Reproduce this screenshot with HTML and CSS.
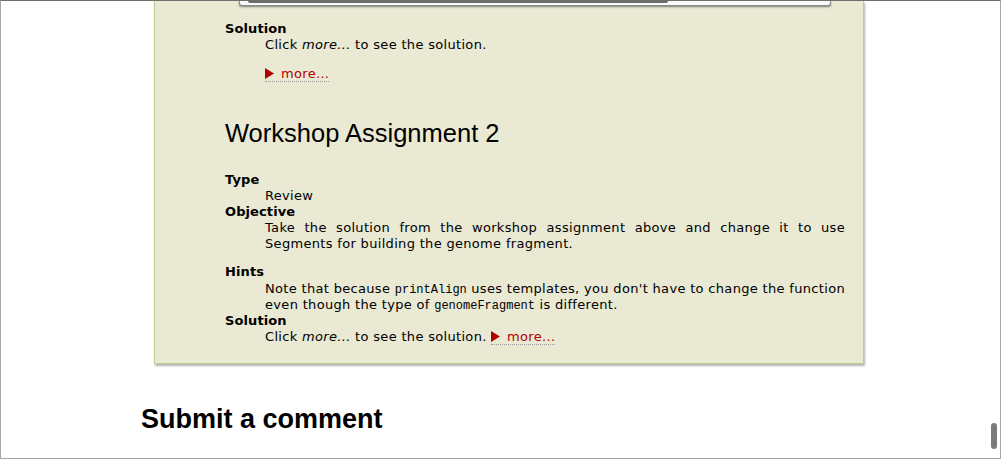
FILE: index.html
```html
<!DOCTYPE html>
<html>
<head>
<meta charset="utf-8">
<link rel="stylesheet" href="styles.css">
</head>
<body>
<div class="window">
  <div class="page">
    <div class="assign">
      <div class="code"><div class="hscroll"></div></div>
      <dl class="fields first">
        <dt>Solution</dt>
        <dd>
          <p>Click <em>more...</em> to see the solution.</p>
          <p class="toggle"><a class="more"><svg class="tri" width="9" height="11" viewBox="0 0 9 11"><path d="M0 0 L9 5.5 L0 11 Z" fill="#b00000"/></svg>more...</a></p>
        </dd>
      </dl>
      <h2 class="title">Workshop Assignment 2</h2>
      <dl class="fields">
        <dt>Type</dt>
        <dd>Review</dd>
        <dt>Objective</dt>
        <dd><p class="para">Take the solution from the workshop assignment above and change it to use Segments for building the genome fragment.</p></dd>
        <dt>Hints</dt>
        <dd class="hints">Note that because <code>printAlign</code> uses templates, you don't have to change the function even though the type of <code>genomeFragment</code> is different.</dd>
        <dt>Solution</dt>
        <dd>Click <em>more...</em> to see the solution. <a class="more"><svg class="tri" width="9" height="11" viewBox="0 0 9 11"><path d="M0 0 L9 5.5 L0 11 Z" fill="#b00000"/></svg>more...</a></dd>
      </dl>
    </div>
    <h1 class="comment">Submit a comment</h1>
  </div>
  <div class="vthumb"></div>
</div>
</body>
</html>
```
FILE: styles.css
```css
html, body {
  margin: 0;
  padding: 0;
  background: #fff;
}
.window {
  position: relative;
  box-sizing: border-box;
  width: 1001px;
  height: 459px;
  overflow: hidden;
  border: 1px solid #a6a6a6;
  border-top-color: #6e6e6e;
  font-family: "DejaVu Sans", Verdana, sans-serif;
  font-size: 13px;
  line-height: 16px;
  color: #000;
}
.page {
  margin-left: 140px;
}
.assign {
  margin-left: 13px;
  width: 710px;
  box-sizing: border-box;
  background: #e9e9d4;
  border: 1px solid #c3ca95;
  border-top: none;
  padding: 0 18px 18px 70px;
  box-shadow: 1px 2px 2px rgba(0, 0, 0, 0.3);
}
.code {
  margin: 0 14px;
  height: 4px;
  background: #fafafa;
  border: 1px solid #8a8a8a;
  border-top: none;
  border-radius: 0 0 3px 3px;
  box-shadow: 0 1px 2px rgba(0, 0, 0, 0.45);
}
.hscroll {
  margin-left: 8px;
  width: 420px;
  height: 2px;
  background: #6a6a6a;
  border-radius: 0 0 2px 2px;
}
.fields {
  margin: 0;
  letter-spacing: 0.32px;
}
.fields.first {
  margin-top: 15px;
}
.fields dt {
  font-weight: bold;
  letter-spacing: 0.1px;
}
.fields dd {
  margin: 0 0 0 40px;
  text-align: justify;
}
.fields dd.hints {
  padding-top: 1px;
}
.fields p {
  margin: 0;
}
.fields p.para {
  margin-bottom: 12px;
}
.fields p.toggle {
  margin-top: 13px;
}
.more {
  color: #b00000;
  border-bottom: 1px dotted #9a9a9a;
  text-decoration: none;
}
.tri {
  display: inline-block;
  vertical-align: -1px;
  margin-right: 7px;
}
code {
  font-family: "Liberation Mono", "Courier New", monospace;
  font-size: 12px;
  line-height: 1;
  letter-spacing: 0;
}
.title {
  margin: 36px 0 24px;
  font-family: "Liberation Sans", Arial, Helvetica, sans-serif;
  font-size: 25.5px;
  line-height: 30px;
  font-weight: normal;
}
.comment {
  margin: 39px 0 0;
  font-family: "Liberation Sans", Arial, Helvetica, sans-serif;
  font-size: 27px;
  line-height: 32px;
  font-weight: bold;
}
.vthumb {
  position: absolute;
  right: 3px;
  top: 422px;
  width: 6px;
  height: 26px;
  border-radius: 3px;
  background: #7b7b7b;
}
```
